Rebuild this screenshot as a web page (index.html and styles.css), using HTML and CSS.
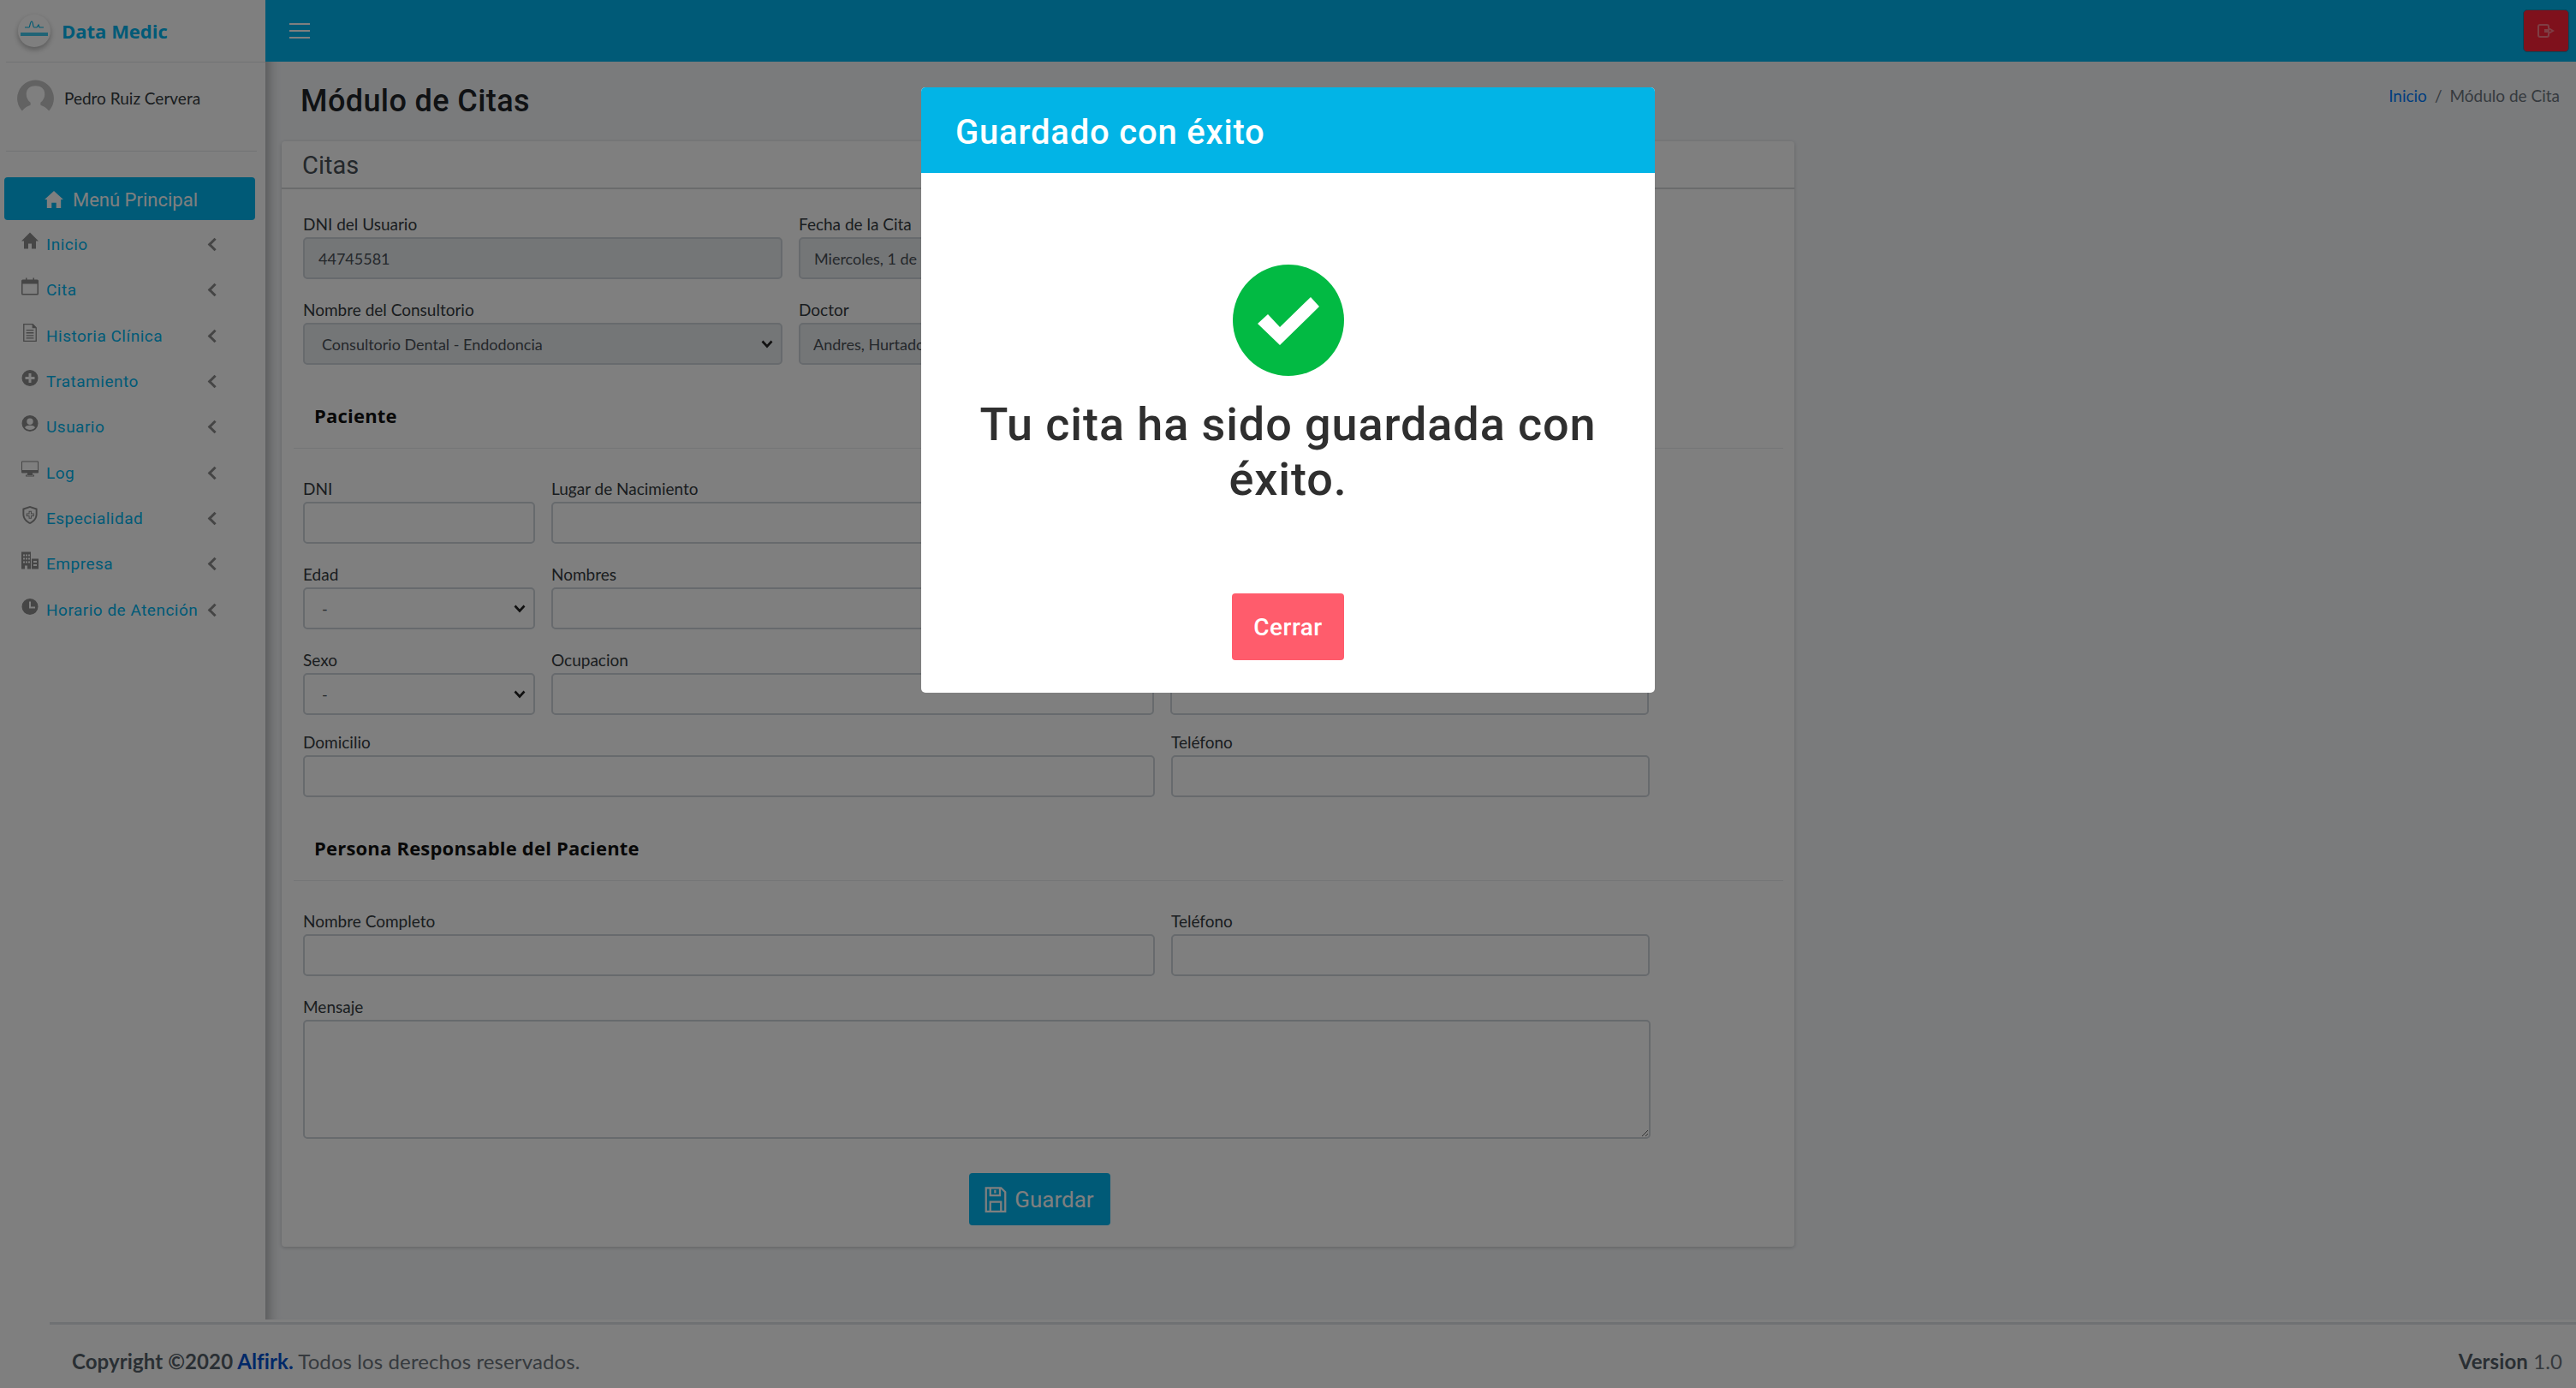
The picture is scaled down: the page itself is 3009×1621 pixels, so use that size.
FILE: index.html
```html
<!DOCTYPE html>
<html lang="es">
<head>
  <meta charset="UTF-8">
  <title>Módulo de Citas</title>
  <link rel="stylesheet" href="styles.css">
</head>
<body>
  <div class="wrapper">
    <aside class="sidebar">
      <div class="brand">
        <svg class="brand-logo" viewBox="0 0 40 38">
          <circle cx="20" cy="19" r="19" fill="#fff"/>
          <path d="M9 15h5c1 0 1-7 3-7s1 7 3 7h3l2-3 1 3h5" fill="none" stroke="#00b5e6" stroke-width="1.2"/>
          <path d="M4 21h32v4H4z" fill="#00b5e6" opacity=".75"/>
        </svg>
        <span class="brand-name">Data Medic</span>
      </div>
      <div class="user-panel">
        <svg class="avatar" viewBox="0 0 44 38">
          <path d="M22 0a22 22 0 0 0-16 37c3-4 7-6 10-7v-3c-3-2-5-6-5-10 0-7 5-10 11-10s11 3 11 10c0 4-2 8-5 10v3c3 1 7 3 10 7A22 22 0 0 0 22 0z" fill="#c4c4c4"/>
        </svg>
        <span class="user-name">Pedro Ruiz Cervera</span>
      </div>
      <div class="menu-title">
        <svg class="icon-home" viewBox="0 0 24 22"><path d="M12 0 0 11h3v11h6v-7h6v7h6V11h3z"/></svg>
        <span>Menú Principal</span>
      </div>
      <ul class="menu">
        <li class="menu-item">
          <svg class="menu-icon" viewBox="0 0 20 20"><path d="M10 0 0 10h3v9h5v-6h4v6h5v-9h3z"/></svg>
          <span class="menu-text">Inicio</span><span class="chevron"></span>
        </li>
        <li class="menu-item">
          <svg class="menu-icon" viewBox="0 0 20 20"><path d="M5 0v2H1.500A1.500 1.500 0 0 0 0 3.500v15A1.500 1.500 0 0 0 1.500 20h17a1.500 1.500 0 0 0 1.500-1.500v-15A1.500 1.500 0 0 0 18.500 2H15V0h-1.500v2h-7V0zM1.500 7h17v11.500h-17z"/></svg>
          <span class="menu-text">Cita</span><span class="chevron"></span>
        </li>
        <li class="menu-item">
          <svg class="menu-icon" viewBox="0 0 20 24"><path d="M1 0h13l5 5v19H1zm1.500 1.500v21h15V6H13V1.500zM5 8h10v1.500H5zm0 3.500h10V13H5zM5 15h10v1.500H5zm0 3.500h10V20H5z"/></svg>
          <span class="menu-text">Historia Clínica</span><span class="chevron"></span>
        </li>
        <li class="menu-item">
          <svg class="menu-icon" viewBox="0 0 20 20"><path d="M10 .5a9.500 9.500 0 1 0 0 19 9.500 9.500 0 0 0 0-19zM8.500 4.500h3v4h4v3h-4v4h-3v-4h-4v-3h4z"/></svg>
          <span class="menu-text">Tratamiento</span><span class="chevron"></span>
        </li>
        <li class="menu-item">
          <svg class="menu-icon" viewBox="0 0 20 20"><path d="M10 .5a9.500 9.500 0 1 0 0 19 9.500 9.500 0 0 0 0-19zm0 3.500a3.700 3.700 0 1 1 0 7.400A3.700 3.700 0 0 1 10 4zm0 13.500c-2.400 0-4.500-1-6-2.800 1-1.600 3-2.400 6-2.400s5 .8 6 2.400c-1.500 1.800-3.600 2.800-6 2.800z"/></svg>
          <span class="menu-text">Usuario</span><span class="chevron"></span>
        </li>
        <li class="menu-item">
          <svg class="menu-icon" viewBox="0 0 20 20"><path d="M1 0h18a1 1 0 0 1 1 1v12a1 1 0 0 1-1 1h-6v2h2v2H5v-2h2v-2H1a1 1 0 0 1-1-1V1a1 1 0 0 1 1-1zm0 1v9.500h18V1zM6 17v.5h8V17z"/></svg>
          <span class="menu-text">Log</span><span class="chevron"></span>
        </li>
        <li class="menu-item">
          <svg class="menu-icon" viewBox="0 0 20 22"><path d="M10 0 1 3v7c0 5.500 4 10 9 12 5-2 9-6.500 9-12V3zm0 2 7 2.400V10c0 4.500-3 8-7 10-4-2-7-5.500-7-10V4.400zM8.500 6v3h-3v3.500h3v3H12v-3h3V9h-3V6zm1 1H11v3h3v1.500h-3v3H9.500v-3h-3V10h3z"/></svg>
          <span class="menu-text">Especialidad</span><span class="chevron"></span>
        </li>
        <li class="menu-item">
          <svg class="menu-icon" viewBox="0 0 20 20"><path d="M0 0h11v20H7v-4H4v4H0zm2 3v2h2V3zm3 0v2h2V3zm3 0v2h2V3zM2 7v2h2V7zm3 0v2h2V7zm3 0v2h2V7zm-6 4v2h2v-2zm3 0v2h2v-2zm3 0v2h2v-2zm4-3h8v12h-8zm2 2.500v2h4v-2zm0 4v2h4v-2z"/></svg>
          <span class="menu-text">Empresa</span><span class="chevron"></span>
        </li>
        <li class="menu-item">
          <svg class="menu-icon" viewBox="0 0 20 20"><path d="M10 .5a9.500 9.500 0 1 0 0 19 9.500 9.500 0 0 0 0-19zM9 4h2v6h5v2H9z"/></svg>
          <span class="menu-text">Horario de Atención</span><span class="chevron"></span>
        </li>
      </ul>
    </aside>

    <div class="main">
      <nav class="navbar">
        <div class="burger"><span></span><span></span><span></span></div>
        <button class="btn-logout" type="button">
          <svg viewBox="0 0 20 16"><path d="M3 1h8a2 2 0 0 1 2 2v2l5 3-5 3v2a2 2 0 0 1-2 2H3a2 2 0 0 1-2-2V3a2 2 0 0 1 2-2z" fill="none" stroke="#ff7c88" stroke-width="2"/><path d="M8 6h6v4H8z" fill="#ff7c88"/></svg>
        </button>
      </nav>
      <div class="content-header">
        <h1>Módulo de Citas</h1>
        <div class="breadcrumb"><a href="#">Inicio</a><span class="sep">/</span><span>Módulo de Cita</span></div>
      </div>
      <section class="card">
        <div class="card-header">Citas</div>
        <form class="card-body">
          <div class="row">
            <div class="field col-half"><label>DNI del Usuario</label><input class="is-readonly" type="text" value="44745581" readonly></div>
            <div class="field col-wide"><label>Fecha de la Cita</label><input class="is-readonly" type="text" value="Miercoles, 1 de" readonly></div>
          </div>
          <div class="row">
            <div class="field col-half"><label>Nombre del Consultorio</label><select class="is-readonly"><option>Consultorio Dental - Endodoncia</option></select></div>
            <div class="field col-wide"><label>Doctor</label><select class="is-readonly select-doctor"><option>Andres, Hurtado</option></select></div>
          </div>

          <h3 class="section-title">Paciente</h3>
          <div class="row">
            <div class="field col-a"><label>DNI</label><input type="text"></div>
            <div class="field col-b"><label>Lugar de Nacimiento</label><input type="text"></div>
            <div class="field col-c"><label>&nbsp;</label><input type="text"></div>
          </div>
          <div class="row">
            <div class="field col-a"><label>Edad</label><select><option>-</option></select></div>
            <div class="field col-b"><label>Nombres</label><input type="text"></div>
            <div class="field col-c"><label>&nbsp;</label><input type="text"></div>
          </div>
          <div class="row row-tight">
            <div class="field col-a"><label>Sexo</label><select><option>-</option></select></div>
            <div class="field col-b"><label>Ocupacion</label><input type="text"></div>
            <div class="field col-c"><label>&nbsp;</label><input type="text"></div>
          </div>
          <div class="row">
            <div class="field col-ab"><label>Domicilio</label><input type="text"></div>
            <div class="field col-c"><label>Teléfono</label><input type="text"></div>
          </div>

          <h3 class="section-title">Persona Responsable del Paciente</h3>
          <div class="row">
            <div class="field col-ab"><label>Nombre Completo</label><input type="text"></div>
            <div class="field col-c"><label>Teléfono</label><input type="text"></div>
          </div>
          <div class="row">
            <div class="field col-full"><label>Mensaje</label><textarea></textarea></div>
          </div>
          <div class="actions">
            <button class="btn-save" type="button">
              <svg viewBox="0 0 20 24"><path d="M1 1h14l4 4v18H1zM5 1v7h9V1M9.500 3v3M5 23v-9h10v9" fill="none" stroke="#fff" stroke-width="1.800"/></svg>
              Guardar
            </button>
          </div>
        </form>
      </section>
    </div>

    <footer class="footer">
      <div><strong>Copyright ©2020 <a href="#">Alfirk.</a></strong> Todos los derechos reservados.</div>
      <div><strong>Version</strong> 1.0</div>
    </footer>
  </div>

  <div class="overlay">
    <div class="modal">
      <div class="modal-header">Guardado con éxito</div>
      <div class="modal-body">
        <svg class="check" viewBox="0 0 130 130">
          <circle cx="65" cy="65" r="65" fill="#02ba43"/>
          <path d="M29 69 41 58 55 73 91 38 101 49 55 94z" fill="#fff"/>
        </svg>
        <p class="modal-text">Tu cita ha sido guardada con éxito.</p>
        <button class="btn-close" type="button">Cerrar</button>
      </div>
    </div>
  </div>
</body>
</html>
```

FILE: styles.css
```css
* {
  box-sizing: border-box;
}
body {
  margin: 0;
  height: 100vh;
  overflow: hidden;
  background: #fff;
  font-family: 'Roboto', sans-serif;
  color: #212529;
}
.wrapper {
  display: grid;
  grid-template-columns: 310px 1fr;
  grid-template-rows: 1541px 80px;
  height: 100%;
}

/* sidebar */
.sidebar {
  background: #fff;
}
.brand {
  height: 73px;
  margin-left: 7px;
  padding-left: 13px;
  display: flex;
  align-items: center;
  gap: 12px;
  border-bottom: 1px solid #e3e6e8;
}
.brand-logo {
  width: 40px;
  height: 38px;
  filter: drop-shadow(0 3px 3px rgba(0, 0, 0, 0.3));
}
.brand-name {
  font-family: 'Open Sans', sans-serif;
  font-weight: 700;
  font-size: 22px;
  color: #00b5ef;
}
.user-panel {
  height: 104px;
  margin: 0 10px 0 7px;
  padding: 20px 0 0 13px;
  display: flex;
  align-items: flex-start;
  gap: 12px;
  border-bottom: 1px solid #e3e6e8;
}
.avatar {
  width: 43px;
  height: 38px;
}
.user-name {
  font-family: 'Lato', sans-serif;
  font-size: 19px;
  color: #343a40;
  margin-top: 10px;
}
.menu-title {
  margin: 30px 12px 0 5px;
  height: 50px;
  padding: 2px 20px 0 0;
  background: #00b5ef;
  border-radius: 4px;
  color: #fff;
  font-size: 22px;
  display: flex;
  align-items: center;
  justify-content: center;
  gap: 11px;
}
.icon-home {
  width: 22px;
  height: 20px;
  fill: #fff;
}
.menu {
  list-style: none;
  margin: 2px 0 0;
  padding: 0;
}
.menu-item {
  height: 53.3px;
  padding-left: 25px;
  display: flex;
  align-items: center;
  font-size: 19px;
  letter-spacing: 0.5px;
  color: #00b5ef;
}
.menu-icon {
  width: 20px;
  height: 21px;
  margin: -8px 9px 0 0;
  flex: none;
  fill: #8c8c8c;
}
.menu-text {
  width: 191px;
  white-space: nowrap;
}
.chevron {
  width: 11px;
  height: 11px;
  border-left: 3px solid #8a8a8a;
  border-bottom: 3px solid #8a8a8a;
  transform: rotate(45deg);
}

/* navbar and page */
.main {
  background: #f4f6f9;
  min-width: 0;
  box-shadow: inset 16px 0 14px -12px rgba(0, 0, 0, 0.3);
}
.navbar {
  height: 72px;
  background: #00b5ef;
  display: flex;
  align-items: center;
  justify-content: space-between;
  padding: 0 8px 0 28px;
}
.burger {
  width: 24px;
  display: flex;
  flex-direction: column;
  gap: 6px;
}
.burger span {
  height: 2px;
  background: #fff;
}
.btn-logout {
  width: 54px;
  height: 50px;
  padding: 0;
  border: 1px solid #0090b8;
  border-radius: 5px;
  background: #ff2238;
  display: flex;
  align-items: center;
  justify-content: center;
}
.btn-logout svg {
  width: 20px;
  height: 16px;
}
.content-header {
  height: 93px;
  padding: 0 19px 0 41px;
  display: flex;
  align-items: flex-start;
  justify-content: space-between;
}
.content-header h1 {
  margin: 21px 0 0;
  font-size: 36px;
  font-weight: 500;
  letter-spacing: 0.4px;
  line-height: 50px;
  color: #212529;
}
.breadcrumb {
  margin-top: 28px;
  font-family: 'Lato', sans-serif;
  font-size: 19px;
  color: #6c757d;
}
.breadcrumb a {
  color: #007bff;
  text-decoration: none;
}
.sep {
  margin: 0 9px;
}

/* form card */
.card {
  width: 1767px;
  height: 1291px;
  margin-left: 19px;
  background: #fff;
  border-radius: 4px;
  box-shadow: 0 1px 4px rgba(0, 0, 0, 0.2);
}
.card-header {
  height: 56px;
  padding: 0 0 0 24px;
  font-size: 29px;
  line-height: 56px;
  color: #495057;
  border-bottom: 2px solid #d5d7d9;
}
.card-body {
  padding: 28px 11px 0 25px;
}
.row {
  display: flex;
  gap: 19px;
  margin-bottom: 23px;
}
.row-tight {
  margin-bottom: 19px;
}
.field {
  display: flex;
  flex-direction: column;
}
.field label {
  font-family: 'Lato', sans-serif;
  font-size: 19px;
  line-height: 26px;
  margin-bottom: 2px;
  color: #343a40;
}
.col-half {
  width: 560px;
}
.col-wide {
  width: 995px;
}
.col-a {
  width: 271px;
}
.col-b {
  width: 704px;
}
.col-c {
  width: 559px;
}
.col-ab {
  width: 995px;
}
.col-full {
  width: 1574px;
}
.field input,
.field select,
.field textarea {
  width: 100%;
  height: 49px;
  padding: 0 16px;
  border: 2px solid #ced4da;
  border-radius: 5px;
  background: #fff;
  font-family: 'Lato', sans-serif;
  font-size: 18px;
  color: #495057;
}
.field select {
  padding-left: 20px;
  appearance: none;
  background-image: url("data:image/svg+xml,%3Csvg xmlns='http://www.w3.org/2000/svg' viewBox='0 0 14 10'%3E%3Cpath d='M1.500 1.500 7 7.500l5.500-6' fill='none' stroke='%23222' stroke-width='2.600'/%3E%3C/svg%3E");
  background-repeat: no-repeat;
  background-position: right 9px center;
  background-size: 14px 10px;
}
.field .select-doctor {
  padding-left: 15px;
}
.field textarea {
  height: 139px;
  display: block;
}
.field .is-readonly {
  background-color: #e9ecef;
}
.section-title {
  margin: 40px 0 0 -11px;
  height: 58px;
  padding: 3px 0 0 24px;
  width: 1740px;
  font-family: 'Open Sans', sans-serif;
  font-size: 22px;
  font-weight: 700;
  letter-spacing: 0.2px;
  line-height: 32px;
  color: #111;
  border-bottom: 1px solid #e9ebed;
}
.section-title + .row {
  margin-top: 34px;
}
.actions {
  display: flex;
  justify-content: center;
  margin-top: 40px;
  padding-right: 11px;
}
.btn-save {
  width: 165px;
  height: 61px;
  border: 0;
  border-radius: 4px;
  background: #00b5ef;
  color: #fff;
  font-family: 'Roboto', sans-serif;
  font-size: 26px;
  display: flex;
  align-items: center;
  justify-content: center;
  gap: 9px;
}
.btn-save svg {
  width: 26px;
  height: 30px;
}

/* footer */
.footer {
  grid-column: 1 / 3;
  margin: 3px 0 0 58px;
  padding: 10px 16px 0 26px;
  border-top: 3px solid #dee2e6;
  background: #fff;
  display: flex;
  justify-content: space-between;
  align-items: center;
  font-family: 'Lato', sans-serif;
  font-size: 24px;
  letter-spacing: 0.1px;
  color: #6c757d;
}
.footer strong {
  color: #555f68;
}
.footer a {
  color: #0050d0;
  text-decoration: none;
}

/* success dialog */
.overlay {
  position: fixed;
  top: 0;
  left: 0;
  width: 100%;
  height: 100%;
  z-index: 10;
  background: rgba(0, 0, 0, 0.5);
  padding-top: 102px;
}
.modal {
  width: 857px;
  height: 707px;
  margin-left: 1076px;
  background: #fff;
  border-radius: 5px;
  overflow: hidden;
}
.modal-header {
  height: 100px;
  background: #02b4e6;
  color: #fff;
  font-size: 40px;
  font-weight: 500;
  letter-spacing: 0.8px;
  line-height: 106px;
  padding-left: 40px;
}
.modal-body {
  display: flex;
  flex-direction: column;
  align-items: center;
  padding-top: 107px;
}
.check {
  width: 130px;
  height: 130px;
}
.modal-text {
  width: 760px;
  margin: 25px 0 0;
  text-align: center;
  font-size: 54px;
  font-weight: 500;
  letter-spacing: 0.9px;
  line-height: 64px;
  color: #2f2f2f;
}
.btn-close {
  width: 131px;
  height: 78px;
  margin-top: 101px;
  border: 0;
  border-radius: 4px;
  background: #ff5c6c;
  color: #fff;
  font-family: 'Roboto', sans-serif;
  font-size: 28px;
  font-weight: 500;
  letter-spacing: 0.5px;
}
```
